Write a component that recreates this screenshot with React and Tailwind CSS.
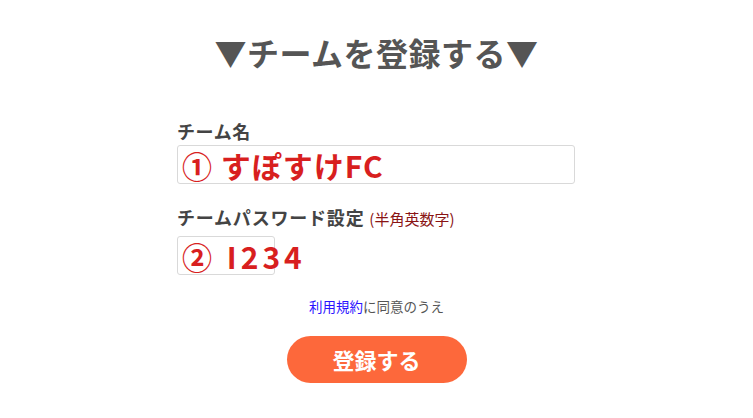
import React from 'react';

const font = { fontFamily: '"Noto Sans CJK JP", "Noto Sans", sans-serif' };

const App = () => {
    return (
        <div className="w-[753px] h-[418px] bg-white text-[#555]" style={font}>
            <h1 className="pt-[29px] text-center text-[32px] font-bold leading-[46px] text-[#555] tracking-[0.5px]">
                ▼チームを登録する▼
            </h1>

            <div className="ml-[177px] mt-[44px] w-[398px]">
                {/* Team name */}
                <label className="block text-[18px] font-bold leading-[24px] text-[#444] tracking-[0.6px]">チーム名</label>
                <div className="mt-[2px] h-[39px] w-[398px] rounded-[3px] border border-[#d9d9d9] flex items-center pl-[4px]">
                    <span className="text-[30px] font-bold leading-none text-[#d81f1f] tracking-[1px]">① すぽすけFC</span>
                </div>

                {/* Password */}
                <label className="mt-[21px] block text-[18px] font-bold leading-[24px] text-[#444] tracking-[0.8px]">
                    チームパスワード設定 <span className="text-[15px] font-normal tracking-normal text-[#8a1414]">(半角英数字)</span>
                </label>
                <div className="mt-[5px] h-[39px] w-[98px] rounded-[3px] border border-[#d9d9d9] flex items-center pl-[4px] overflow-visible">
                    <span className="whitespace-nowrap text-[30px] font-bold leading-none text-[#d81f1f] tracking-[4px]">② I234</span>
                </div>
            </div>

            <p className="mt-[21px] text-center text-[13.5px] leading-[20px] text-[#555]">
                <a className="text-[#2a12ff]">利用規約</a>に同意のうえ
            </p>

            <div className="mt-[20px] flex justify-center">
                <button className="h-[47px] w-[180px] rounded-full bg-[#fd683b] text-[22px] font-bold text-white">
                    登録する
                </button>
            </div>
        </div>
    );
};

export default App;
